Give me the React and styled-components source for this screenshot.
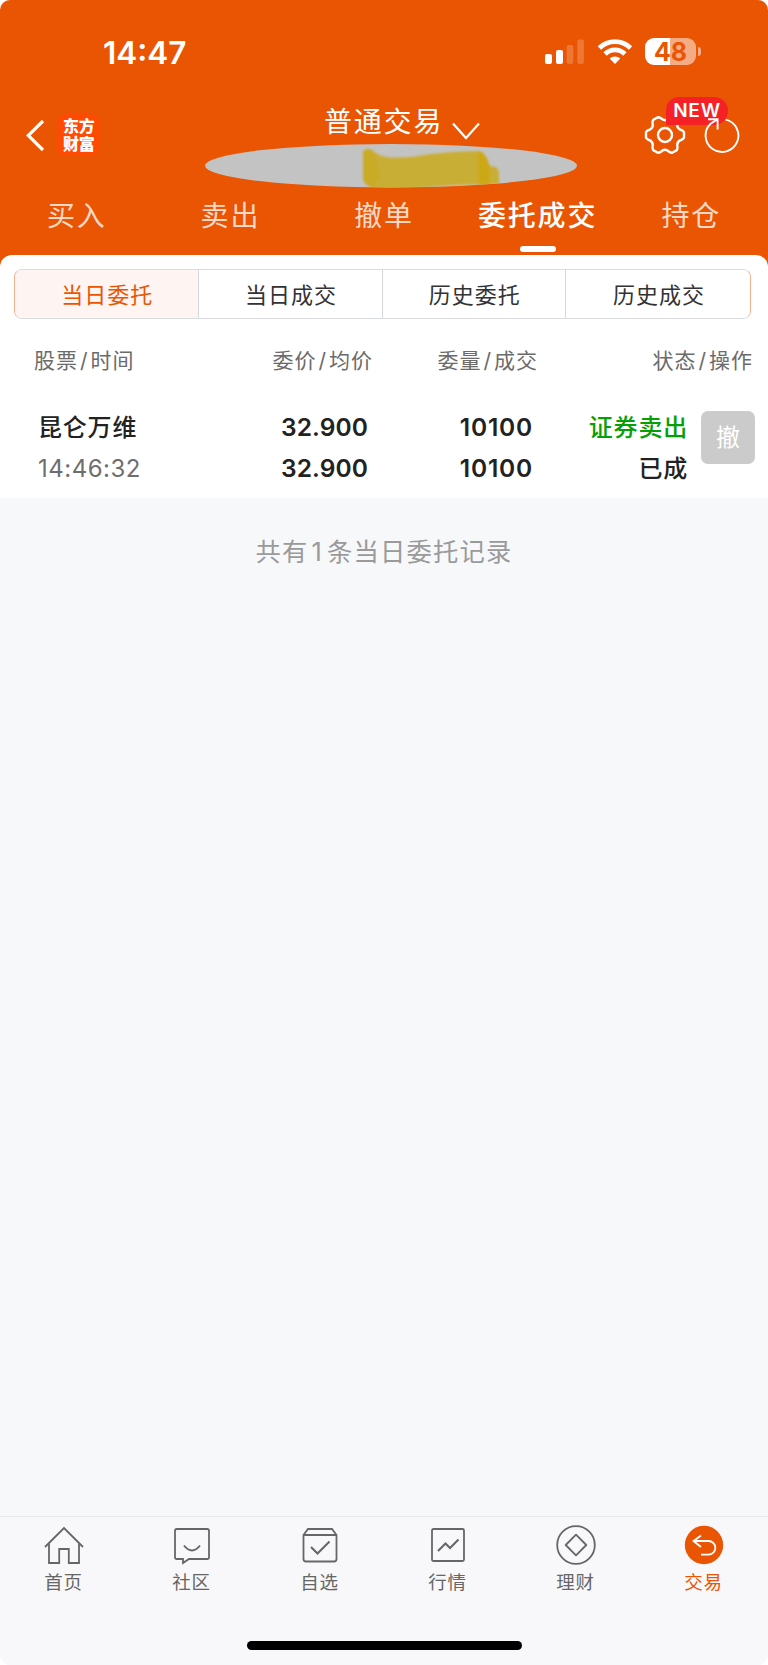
import React from 'react';
import styled, { createGlobalStyle } from 'styled-components';

const GlobalStyle = createGlobalStyle`
  body {
    margin: 0;
    background: #fff;
    font-family: Inter, "Noto Sans CJK SC", sans-serif;
  }
  * {
    box-sizing: border-box;
  }
`;

const Screen = styled.div`
  width: 768px;
  height: 1665px;
  display: flex;
  flex-direction: column;
  background: #f7f8fa;
  border-radius: 10px;
  overflow: hidden;
`;

const Header = styled.header`
  height: 269px;
  flex: none;
  background: #ea5504;
  color: #fff;
`;

const StatusBar = styled.div`
  height: 104px;
  padding: 1px 67px 0 103px;
  display: flex;
  align-items: center;
  justify-content: space-between;
`;

const Clock = styled.span`
  font-size: 31.5px;
  font-weight: 600;
  line-height: 40px;
`;

const StatusIcons = styled.div`
  display: flex;
  align-items: center;
  margin-top: -2px;
  svg {
    display: block;
  }
`;

const Battery = styled.div`
  width: 51px;
  height: 27px;
  margin-left: 12px;
  border-radius: 9px;
  background: linear-gradient(to right, #fff 49%, #f5ab83 49%);
  color: #ea5504;
  font-size: 25px;
  font-weight: 700;
  line-height: 28px;
  text-align: center;
`;

const BatteryCap = styled.div`
  width: 3px;
  height: 9px;
  margin-left: 2px;
  border-radius: 0 4px 4px 0;
  background: #f5ab83;
`;

const NavBar = styled.div`
  height: 84px;
  display: grid;
  grid-template-columns: 205px 372px 191px;
`;

const NavLeft = styled.div`
  display: flex;
  align-items: flex-start;
  padding: 10px 0 0 26px;
`;

const Logo = styled.div`
  width: 42px;
  height: 42px;
  margin-left: 12px;
  padding: 3px 0 0 6px;
  border-radius: 9px;
  background: #ff4a03;
  font-size: 16px;
  font-weight: 900;
  line-height: 18px;
  letter-spacing: -0.3px;
`;

const NavCenter = styled.div`
  display: flex;
  flex-direction: column;
  svg {
    display: block;
  }
`;

const Title = styled.div`
  height: 40px;
  padding-left: 119px;
  display: flex;
  font-size: 28px;
  line-height: 36px;
  letter-spacing: 1.8px;
  svg {
    margin: 18px 0 0 9px;
  }
`;

const NavRight = styled.div`
  position: relative;
  display: flex;
  align-items: flex-start;
  padding: 10px 0 0 67px;
`;

const NewBadge = styled.span`
  position: absolute;
  left: 89px;
  top: -7px;
  width: 62px;
  height: 28px;
  border-radius: 13px 14px 14px 0;
  background: #f52126;
  font-size: 19px;
  font-weight: 600;
  line-height: 28px;
  letter-spacing: 0.8px;
  text-align: center;
`;

const RefreshWrap = styled.span`
  position: relative;
  margin-left: 18px;
`;

const Tabs = styled.nav`
  height: 67px;
  display: grid;
  grid-template-columns: repeat(5, 1fr);
`;

const Tab = styled.div`
  display: flex;
  flex-direction: column;
  align-items: center;
  padding-top: 8px;
  font-size: 28px;
  line-height: 40px;
  letter-spacing: 1.8px;
  font-weight: ${({ $active }) => ($active ? 500 : 400)};
  color: ${({ $active }) => ($active ? '#fff' : '#fbd9c6')};
  &::after {
    content: '';
    width: 36px;
    height: 6px;
    margin-top: 10px;
    border-radius: 3px;
    background: ${({ $active }) => ($active ? '#fff' : 'transparent')};
  }
`;

const Sheet = styled.section`
  height: 243px;
  flex: none;
  margin-top: -14px;
  padding-top: 14px;
  border-radius: 12px 12px 0 0;
  background: #fff;
`;

const Segments = styled.div`
  height: 50px;
  margin: 0 17px 0 14px;
  display: grid;
  grid-template-columns: repeat(4, 1fr);
  border: 1px solid #d9dde3;
  border-left-color: #f0b090;
  border-right-color: #f0b090;
  border-radius: 8px;
  overflow: hidden;
`;

const Segment = styled.div`
  padding-left: 2px;
  text-align: center;
  font-size: 22px;
  line-height: 50px;
  letter-spacing: 1px;
  color: ${({ $active }) => ($active ? '#ea5504' : '#333')};
  background: ${({ $active }) => ($active ? '#fef5f2' : '#fff')};
  &:not(:last-child) {
    border-right: 1px solid #d3d7de;
  }
`;

const Columns = styled.div`
  height: 84px;
  padding: 0 15px 0 34px;
  display: grid;
  grid-template-columns: 140px 199px 165px 215px;
  font-size: 21px;
  line-height: 84px;
  letter-spacing: 1px;
  color: #6b6b6b;
  span + span {
    text-align: right;
  }
  i {
    font-style: normal;
    margin: 0 2px;
  }
`;

const Order = styled.div`
  height: 94px;
  padding: 4px 13px 0 38px;
  display: grid;
  grid-template-columns: 140px 190px 165px 155px 1fr;
`;

const Cell = styled.div`
  display: flex;
  flex-direction: column;
  align-items: ${({ $left }) => ($left ? 'flex-start' : 'flex-end')};
  font-size: 24px;
  font-weight: 500;
  line-height: 41px;
  color: #222;
`;

const Name = styled.span`
  letter-spacing: 0.8px;
`;

const Time = styled.span`
  font-weight: 400;
  letter-spacing: 0.5px;
  color: #6e6e6e;
`;

const Num = styled.span`
  font-size: 24.5px;
  font-weight: 600;
  letter-spacing: ${({ $wide }) => ($wide ? '0.8px' : '0.1px')};
`;

const Side = styled(Name)`
  color: #05a005;
`;

const CancelButton = styled.button`
  justify-self: end;
  width: 54px;
  height: 53px;
  margin: 4px 0 0;
  padding: 0;
  border: 0;
  border-radius: 7px;
  background: #cbcbcb;
  color: #fff;
  font-family: inherit;
  font-size: 24px;
  line-height: 53px;
`;

const Summary = styled.p`
  flex: 1;
  margin: 0;
  padding-top: 34px;
  text-align: center;
  font-size: 25.3px;
  line-height: 40px;
  letter-spacing: 1.2px;
  color: #9a9a9a;
  b {
    margin: 0 4px 0 3px;
    font-weight: 400;
  }
`;

const TabBar = styled.footer`
  height: 149px;
  display: flex;
  flex-direction: column;
  align-items: center;
  border-top: 1px solid #e8e9eb;
  background: #f8f8fa;
`;

const TabBarItems = styled.div`
  width: 100%;
  height: 124px;
  display: grid;
  grid-template-columns: repeat(6, 1fr);
`;

const BarItem = styled.div`
  display: flex;
  flex-direction: column;
  align-items: center;
  padding-top: 8px;
  font-size: 18.5px;
  line-height: 34px;
  letter-spacing: 0.8px;
  color: ${({ $active }) => ($active ? '#ea5504' : '#666')};
  span {
    margin-right: 1px;
  }
`;

const HomeIndicator = styled.div`
  width: 275px;
  height: 9px;
  border-radius: 5px;
  background: #000;
`;

const Signal = () => (
  <svg width="40" height="26" viewBox="0 0 40 26" fill="#fff">
    <rect x="0" y="15" width="7" height="10" rx="2" />
    <rect x="11" y="11" width="7" height="14" rx="2" />
    <rect x="21.7" y="6" width="6.6" height="19" rx="2" opacity="0.2" />
    <rect x="32.3" y="0.5" width="6.6" height="24.5" rx="2" opacity="0.2" />
  </svg>
);

const WifiSvg = styled.svg`
  margin-left: 12px;
`;

const Wifi = () => (
  <WifiSvg width="36" height="26" viewBox="0 0 36 26">
    <g fill="none" stroke="#fff" strokeWidth="4.8">
      <path d="M2.4 9 A22.4 22.4 0 0 1 33.6 9" />
      <path d="M8.1 15 A14.1 14.1 0 0 1 27.9 15" />
    </g>
    <path d="M18 25 L12.7 19.6 A7.6 7.6 0 0 1 23.3 19.6 Z" fill="#fff" />
  </WifiSvg>
);

// six-toothed outline, teeth every 60 degrees
const gearPath = () => {
  const at = (r, deg) => {
    const a = (deg * Math.PI) / 180;
    return `${(20 + r * Math.cos(a)).toFixed(2)} ${(20 + r * Math.sin(a)).toFixed(2)}`;
  };
  let d = `M${at(19.2, -8)}`;
  for (let k = 0; k < 360; k += 60) {
    d += ` L${at(19.2, k + 8)}`;
    d += ` Q${at(18.6, k + 13)} ${at(17.3, k + 16)}`;
    d += ` Q${at(12.9, k + 30)} ${at(17.3, k + 44)}`;
    d += ` Q${at(18.6, k + 47)} ${at(19.2, k + 52)}`;
  }
  return `${d} Z`;
};

const Gear = () => (
  <svg width="42" height="42" viewBox="-1 -1 42 42" fill="none" stroke="#fff" strokeWidth="2.4">
    <path d={gearPath()} strokeLinejoin="round" />
    <circle cx="20" cy="20" r="7" />
  </svg>
);

const Refresh = () => (
  <svg width="36" height="42" viewBox="0 0 36 42" fill="none" stroke="#fff" strokeWidth="1.9">
    <path d="M21.6 5.6 A16.4 16.4 0 1 1 6.6 9.8 L13 5.6" />
    <path d="M4 5.2 H13.6 V15.5" />
  </svg>
);

const AccountMask = () => (
  <svg width="372" height="44" viewBox="0 0 372 44">
    <defs>
      <clipPath id="oval">
        <ellipse cx="186" cy="21.7" rx="186" ry="21.7" />
      </clipPath>
      <filter id="soft">
        <feGaussianBlur stdDeviation="0.9" />
      </filter>
    </defs>
    <ellipse cx="186" cy="21.7" rx="186" ry="21.7" fill="#c3c3c3" />
    <g clipPath="url(#oval)">
      <g filter="url(#soft)">
        <path d="M158 7 Q163 3 168 7 Q176 13 186 13.5 Q206 14 226 10 Q250 7 274 7 Q281 8 284 22 L291 23 Q294 25 294 30 V40 L250 41 L200 45 H168 Q158 40 158 34 Z" fill="#c9ae36" />
        <path d="M158 7 Q163 3 168 7 L176 30 L168 43 Q158 40 158 34 Z" fill="#cbaa20" opacity="0.7" />
        <path d="M273 7 Q281 8 285 22 V42 H273 Z" fill="#cda60c" opacity="0.75" />
      </g>
    </g>
  </svg>
);

const icons = {
  home: (
    <>
      <path d="M1 22 L20 3 L39 22" />
      <path d="M5 18.5 V38 H15.2 V24 H24.8 V38 H35 V18.5" />
    </>
  ),
  chat: (
    <>
      <path d="M4.8 4 H35.2 Q37 4 37 5.8 V32.2 Q37 34 35.2 34 H17 L11 38 V34 H4.8 Q3 34 3 32.2 V5.8 Q3 4 4.8 4 Z" />
      <path d="M12 20.5 Q20 30.5 28 20.5" strokeWidth="2" />
    </>
  ),
  box: (
    <>
      <path d="M3.5 10 L8 4 H32 L36.5 10 V34 Q36.5 36.5 34 36.5 H6 Q3.5 36.5 3.5 34 Z" />
      <path d="M3.5 10 H36.5" />
      <path d="M11 22 L17.5 28.5 L29.5 16.5" strokeWidth="2" />
    </>
  ),
  chart: (
    <>
      <rect x="4" y="4" width="32" height="32" rx="1.5" />
      <path d="M10 26 L17.5 18.5 L22 23 L30.5 14.5" strokeWidth="2" />
    </>
  ),
  money: (
    <>
      <circle cx="20" cy="20" r="18.8" />
      <path d="M20 9.7 L30.3 20 L20 30.3 L9.7 20 Z" strokeLinejoin="round" />
    </>
  ),
  trade: (
    <>
      <circle cx="20" cy="20" r="19.2" fill="#ea5504" stroke="none" />
      <path d="M17 10.5 L9.5 16 L17 22 M9.5 16 H24.5 A6.8 6.8 0 0 1 24.5 29.7 H17" stroke="#fff" />
    </>
  ),
};

const BarIcon = ({ name }) => (
  <svg width="40" height="40" viewBox="0 0 40 40" fill="none" stroke="#666" strokeWidth="1.8">
    {icons[name]}
  </svg>
);

const tabs = ['买入', '卖出', '撤单', '委托成交', '持仓'];
const segments = ['当日委托', '当日成交', '历史委托', '历史成交'];
const columns = [
  ['股票', '时间'],
  ['委价', '均价'],
  ['委量', '成交'],
  ['状态', '操作'],
];
const barItems = [
  ['home', '首页'],
  ['chat', '社区'],
  ['box', '自选'],
  ['chart', '行情'],
  ['money', '理财'],
  ['trade', '交易'],
];

const App = () => {
  return (
    <Screen>
      <GlobalStyle />
      <Header>
        <StatusBar>
          <Clock>14:47</Clock>
          <StatusIcons>
            <Signal />
            <Wifi />
            <Battery>48</Battery>
            <BatteryCap />
          </StatusIcons>
        </StatusBar>
        <NavBar>
          <NavLeft>
            <svg width="19" height="42" viewBox="0 0 19 42" fill="none" stroke="#fff" strokeWidth="3.2">
              <path d="M17 7 L2.2 21.5 L17 36" />
            </svg>
            <Logo>
              东方
              <br />
              财富
            </Logo>
          </NavLeft>
          <NavCenter>
            <Title>
              普通交易
              <svg width="28" height="18" viewBox="0 0 28 18" fill="none" stroke="#fff" strokeWidth="2.2">
                <path d="M1 1.5 L14 16 L27 1.5" />
              </svg>
            </Title>
            <AccountMask />
          </NavCenter>
          <NavRight>
            <Gear />
            <NewBadge>NEW</NewBadge>
            <RefreshWrap>
              <Refresh />
            </RefreshWrap>
          </NavRight>
        </NavBar>
        <Tabs>
          {tabs.map((t) => (
            <Tab key={t} $active={t === '委托成交'}>{t}</Tab>
          ))}
        </Tabs>
      </Header>
      <Sheet>
        <Segments>
          {segments.map((s, i) => (
            <Segment key={s} $active={i === 0}>{s}</Segment>
          ))}
        </Segments>
        <Columns>
          {columns.map(([a, b]) => (
            <span key={a}>{a}<i>/</i>{b}</span>
          ))}
        </Columns>
        <Order>
          <Cell $left>
            <Name>昆仑万维</Name>
            <Time>14:46:32</Time>
          </Cell>
          <Cell>
            <Num>32.900</Num>
            <Num>32.900</Num>
          </Cell>
          <Cell>
            <Num $wide>10100</Num>
            <Num $wide>10100</Num>
          </Cell>
          <Cell>
            <Side>证券卖出</Side>
            <Name>已成</Name>
          </Cell>
          <CancelButton>撤</CancelButton>
        </Order>
      </Sheet>
      <Summary>共有<b>1</b>条当日委托记录</Summary>
      <TabBar>
        <TabBarItems>
          {barItems.map(([icon, label]) => (
            <BarItem key={icon} $active={icon === 'trade'}>
              <BarIcon name={icon} />
              <span>{label}</span>
            </BarItem>
          ))}
        </TabBarItems>
        <HomeIndicator />
      </TabBar>
    </Screen>
  );
};

export default App;
